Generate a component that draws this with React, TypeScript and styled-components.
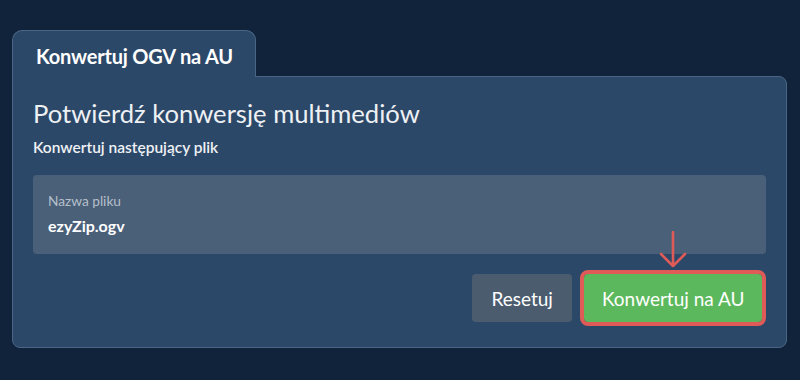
import * as React from 'react';
import styled, { createGlobalStyle } from 'styled-components';

const GlobalStyle = createGlobalStyle`
  html, body {
    margin: 0;
    padding: 0;
    background: #10233a;
    font-family: Lato, "Noto Sans", sans-serif;
    color: #ffffff;
  }
`;

const Page = styled.div`
  width: 800px;
  height: 380px;
  box-sizing: border-box;
  padding: 30px 13px 0 12px;
`;

const TabBar = styled.div`
  display: flex;
`;

const Tab = styled.div`
  box-sizing: border-box;
  width: 244px;
  height: 47px;
  margin-bottom: -1px;
  padding: 13px 0 0 23px;
  background: #2c4868;
  border: 1px solid #4a6585;
  border-bottom: none;
  border-radius: 10px 10px 0 0;
  font-size: 20px;
  font-weight: 700;
  letter-spacing: -0.2px;
  position: relative;
  z-index: 1;
`;

const Panel = styled.div`
  box-sizing: border-box;
  height: 272px;
  padding: 21px 20px 0 20px;
  background: #2c4868;
  border: 1px solid #4a6585;
  border-radius: 0 8px 8px 8px;
`;

const Heading = styled.h1`
  margin: 0;
  font-size: 25.6px;
  font-weight: 400;
  line-height: 30px;
  color: #eef1f4;
`;

const Subtitle = styled.p`
  margin: 10px 0 0;
  font-size: 15.5px;
  font-weight: 600;
  line-height: 18px;
  color: #eef1f4;
`;

const Field = styled.div`
  box-sizing: border-box;
  height: 79px;
  margin-top: 19px;
  padding: 18px 15px 0;
  background: #4a6078;
  border-radius: 4px;
`;

const FieldLabel = styled.div`
  font-size: 13.7px;
  line-height: 16px;
  color: #b4bfca;
`;

const FieldValue = styled.div`
  margin-top: 7px;
  font-size: 16px;
  font-weight: 700;
  line-height: 19px;
  color: #ffffff;
`;

const Actions = styled.div`
  display: flex;
  justify-content: flex-end;
  gap: 12px;
  margin-top: 20px;
  padding-right: 4px;
`;

const Button = styled.button<{ $variant: 'reset' | 'convert' }>`
  height: 48px;
  padding: 0 ${p => (p.$variant === 'convert' ? '17.5px' : '19.5px')};
  border: none;
  border-radius: 4px;
  font-family: inherit;
  font-size: 19px;
  color: #ffffff;
  background: ${p => (p.$variant === 'convert' ? '#5cb85c' : '#4b5c6e')};
  outline: ${p => (p.$variant === 'convert' ? '4px solid #de5b58' : 'none')};
  position: relative;
`;

const Arrow = styled.svg`
  position: absolute;
  left: 50%;
  top: -43px;
  margin-left: -14px;
`;

export default function App() {
  return (
    <>
      <GlobalStyle />
      <Page>
        <TabBar>
          <Tab>Konwertuj OGV na AU</Tab>
        </TabBar>
        <Panel>
          <Heading>Potwierdź konwersję multimediów</Heading>
          <Subtitle>Konwertuj następujący plik</Subtitle>
          <Field>
            <FieldLabel>Nazwa pliku</FieldLabel>
            <FieldValue>ezyZip.ogv</FieldValue>
          </Field>
          <Actions>
            <Button $variant="reset">Resetuj</Button>
            <Button $variant="convert">
              Konwertuj na AU
              <Arrow width="28" height="38" viewBox="0 0 28 38" fill="none">
                <path
                  d="M14 1 V35 M2 23 L14 35 L26 23"
                  stroke="#de5b58"
                  strokeWidth="2.6"
                  strokeLinecap="round"
                  strokeLinejoin="round"
                />
              </Arrow>
            </Button>
          </Actions>
        </Panel>
      </Page>
    </>
  );
}
